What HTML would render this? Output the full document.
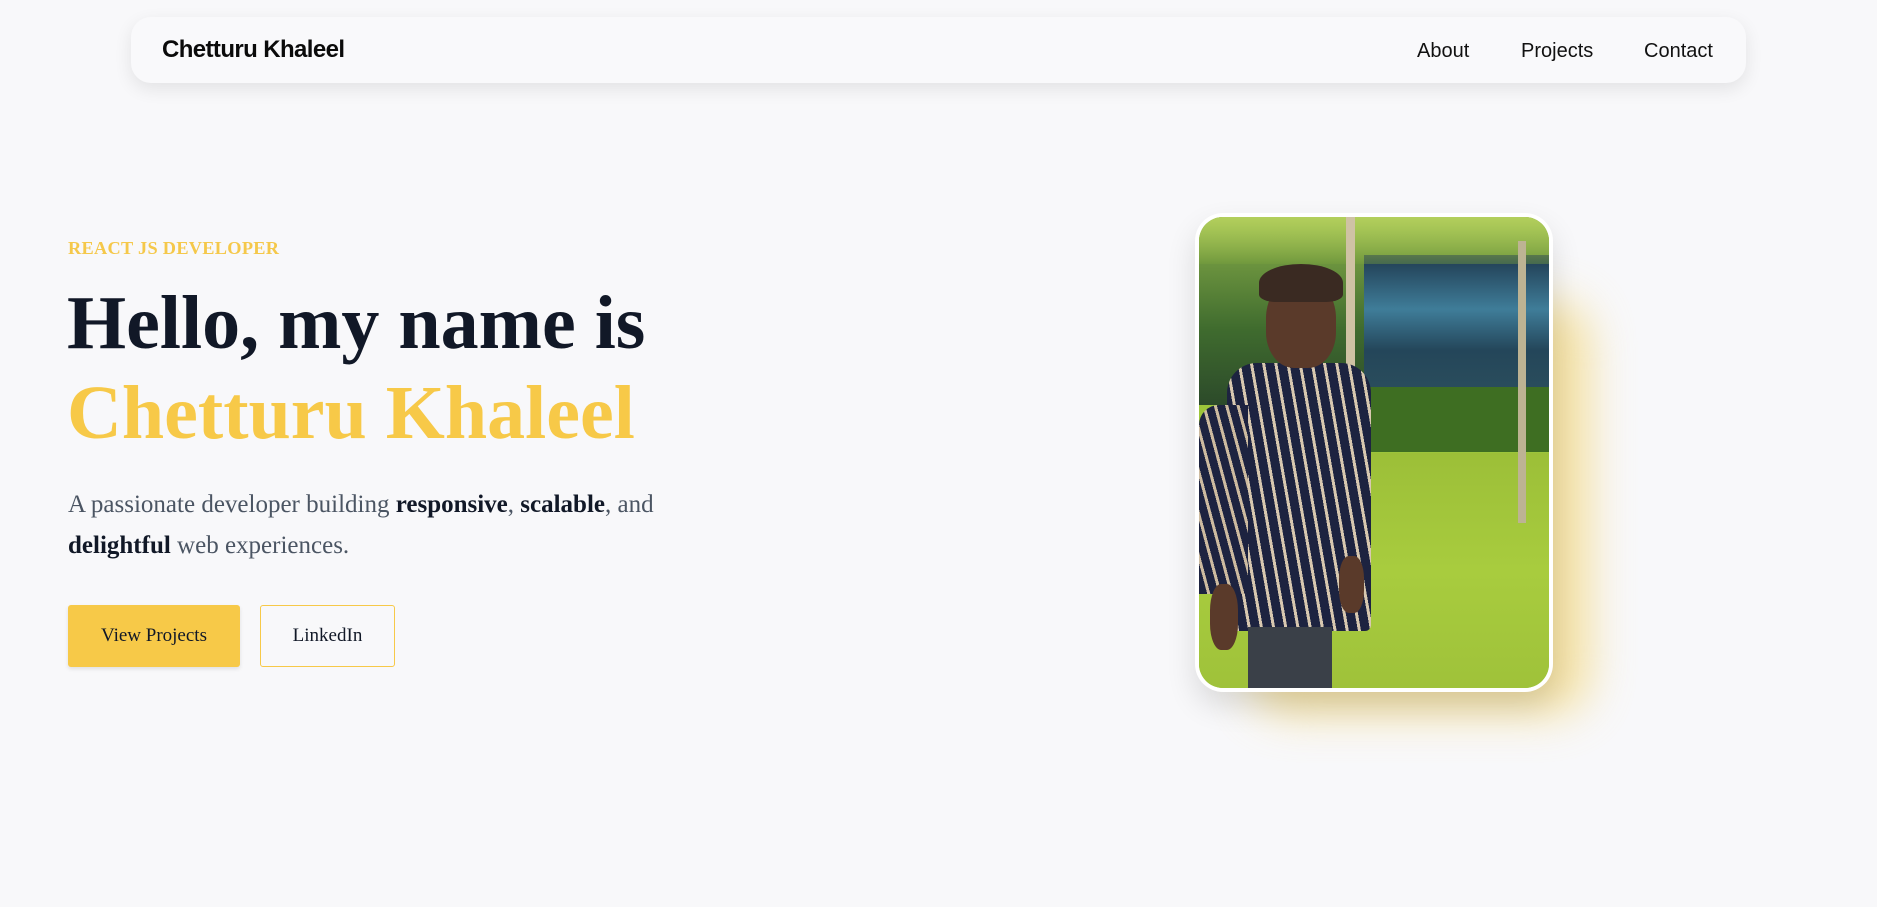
<!DOCTYPE html>
<html><head><meta charset="utf-8"><style>
*{margin:0;padding:0;box-sizing:border-box}
body{width:1877px;height:907px;background:#f8f8fa;overflow:hidden;position:relative;font-family:"Liberation Serif",serif}
.nav{position:absolute;left:131px;top:17px;width:1615px;height:66px;background:#f9f9fb;border-radius:20px;box-shadow:0 6px 18px rgba(0,0,0,.09)}
.logo{position:absolute;left:31px;top:19px;font:bold 24px "Liberation Sans",sans-serif;letter-spacing:-0.6px;color:#0b0b0b}
.links a{position:absolute;top:23px;font:20px "Liberation Sans",sans-serif;color:#111;text-decoration:none}
.lab{position:absolute;left:68px;top:238px;font-weight:bold;font-size:18.3px;color:#f5c84a;letter-spacing:.3px}
h1{position:absolute;left:67px;top:278px;font-size:76px;line-height:90px;font-weight:bold;color:#111827}
h1 span{color:#f7c948}
p{position:absolute;left:68px;top:484px;width:660px;font-size:25px;line-height:41px;color:#4b5563}
p b{color:#111827}
.btn{position:absolute;top:605px;height:62px;font-size:19px;color:#111827;display:flex;align-items:center;justify-content:center;border-radius:3px}
.b1{left:68px;width:172px;background:#f7c948;box-shadow:0 2px 4px rgba(0,0,0,.1)}
.b2{left:260px;width:135px;border:1px solid #f7c948}
.glow{position:absolute;left:1250px;top:300px;width:340px;height:415px;border-radius:40px;background:#f2d883;filter:blur(22px);opacity:.75}
.card{position:absolute;left:1195px;top:213px;width:358px;height:479px;border-radius:28px;background:#fff;box-shadow:0 14px 30px rgba(0,0,0,.12);padding:4px}
.ph{position:relative;width:100%;height:100%;border-radius:24px;overflow:hidden;background:#9cc53a}
.ph div{position:absolute}
</style></head><body>
<div class="nav"><div class="logo">Chetturu Khaleel</div>
<div class="links"><a style="left:1286px">About</a><a style="left:1390px">Projects</a><a style="left:1513px">Contact</a></div></div>
<div class="lab">REACT JS DEVELOPER</div>
<h1>Hello, my name is<br><span>Chetturu Khaleel</span></h1>
<p>A passionate developer building <b>responsive</b>, <b>scalable</b>, and <b>delightful</b> web experiences.</p>
<div class="btn b1">View Projects</div>
<div class="btn b2">LinkedIn</div>
<div class="glow"></div>
<div class="card"><div class="ph">
<div style="left:0;top:0;width:100%;height:40%;background:linear-gradient(180deg,#8bb04a,#3f6b2e 60%,#2c4a2a)"></div>
<div style="left:47%;top:8%;width:53%;height:29%;background:linear-gradient(180deg,#1f3a4f,#3f7d99 40%,#24465a 70%,#2a4d5c)"></div>
<div style="left:0;top:0;width:100%;height:10%;background:linear-gradient(180deg,#b3cf5c,rgba(120,160,60,.4))"></div>
<div style="left:40%;top:36%;width:60%;height:14%;background:#3e6e22"></div>
<div style="left:0;top:50%;width:100%;height:50%;background:linear-gradient(180deg,#9cbf38,#a8cc3e 50%,#9fc23a)"></div>
<div style="left:42%;top:0;width:2.5%;height:55%;background:#cfc2a4"></div>
<div style="left:91%;top:5%;width:2.5%;height:60%;background:#bdb393"></div>
<div style="left:8%;top:31%;width:41%;height:57%;background:repeating-linear-gradient(80deg,#1d2340 0 9px,#d8c8b0 9px 12px);border-radius:30px 30px 6px 6px"></div>
<div style="left:0;top:40%;width:14%;height:40%;background:repeating-linear-gradient(75deg,#1d2340 0 8px,#cdbba0 8px 11px);border-radius:20px 0 0 0"></div>
<div style="left:19%;top:13%;width:20%;height:19%;background:#5a3a2a;border-radius:45% 45% 40% 40%"></div>
<div style="left:17%;top:10%;width:24%;height:8%;background:#3a2a22;border-radius:50% 50% 20% 20%"></div>
<div style="left:14%;top:87%;width:24%;height:13%;background:#3a4048"></div>
<div style="left:3%;top:78%;width:8%;height:14%;background:#5a3a2a;border-radius:40%"></div>
<div style="left:40%;top:72%;width:7%;height:12%;background:#5a3a2a;border-radius:40%"></div>
</div></div>
</body></html>
